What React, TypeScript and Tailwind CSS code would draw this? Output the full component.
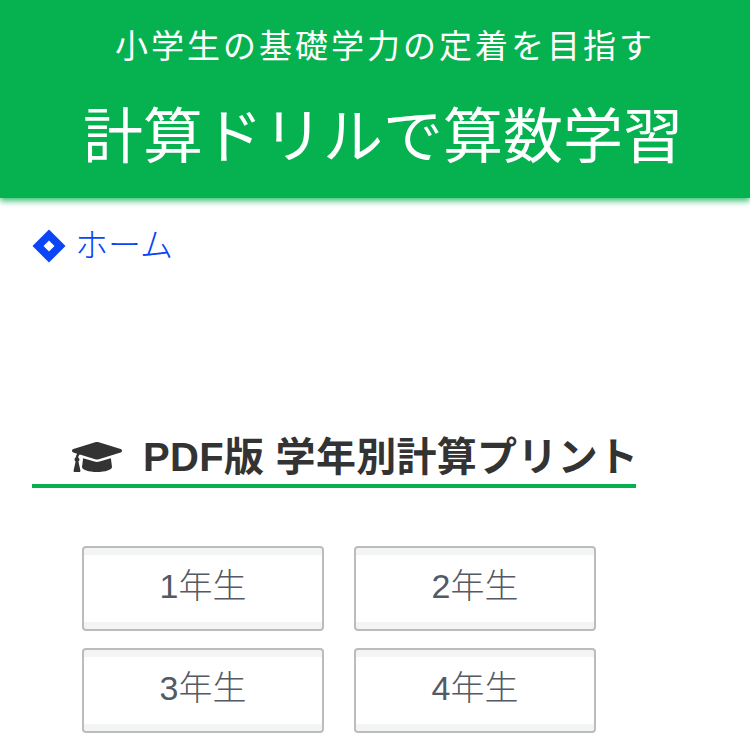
import { FaGraduationCap } from "react-icons/fa";

const cjk = "font-['Liberation_Sans','Noto_Sans_CJK_JP',sans-serif]";

function GradeButton({ label }: { label: string }) {
  return (
    <a className="flex h-[85px] w-[242px] items-center justify-center rounded-[4px] border-2 border-[#bcbcbc] bg-white pb-[5px] text-[34px] leading-none font-light text-[#535a64] shadow-[inset_0_7px_0_#f3f5f5,inset_0_-7px_0_#f3f5f5]">
      {label}
    </a>
  );
}

export default function App() {
  return (
    <div className={`h-[750px] w-[750px] overflow-hidden bg-white ${cjk}`}>
      <header className="flex h-[198px] flex-col items-center bg-[#06b250] pt-[25px] text-white shadow-[0_3px_6px_rgba(6,178,80,0.8)]">
        <p className="pl-[20px] text-[33px] leading-[44px] font-normal tracking-[3px]">小学生の基礎学力の定着を目指す</p>
        <h1 className="mt-[27px] pl-[16px] text-[60px] leading-[84px] font-normal">計算ドリルで算数学習</h1>
      </header>
      <nav className="flex items-center gap-[9px] pl-[32px] pt-[30px]">
        <svg width="34" height="34" viewBox="0 0 34 34" aria-hidden="true">
          <path fill="#0a46f5" fillRule="evenodd" d="M17 0.5 33.5 17 17 33.5 0.5 17Z M17 11.5 11.5 17 17 22.5 22.5 17Z" />
        </svg>
        <a className="text-[33px] leading-[36px] font-light text-[#0a46f5]">ホーム</a>
      </nav>
      <section className="mt-[166px] pl-[32px]">
        <h2 className="flex h-[58px] w-[604px] items-center gap-[21px] border-b-4 border-[#06b250] pl-[40px] text-[40px] font-bold tracking-[0.3px] text-[#333333]">
          <FaGraduationCap size={50} className="shrink-0" />
          <span className="whitespace-nowrap">PDF版 学年別計算プリント</span>
        </h2>
        <div className="mt-[58px] ml-[50px] grid w-[514px] grid-cols-[242px_242px] gap-x-[30px] gap-y-[17px]">
          <GradeButton label="1年生" />
          <GradeButton label="2年生" />
          <GradeButton label="3年生" />
          <GradeButton label="4年生" />
        </div>
      </section>
    </div>
  );
}
